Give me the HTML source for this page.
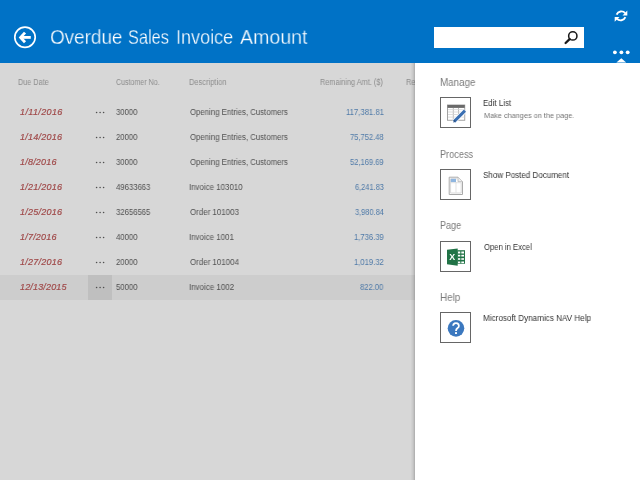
<!DOCTYPE html>
<html><head><meta charset="utf-8">
<style>
html,body{margin:0;padding:0;width:640px;height:480px;overflow:hidden;background:#d7d7d7;font-family:"Liberation Sans",sans-serif;}
.t{position:absolute;white-space:nowrap;line-height:1;transform-origin:0 0;will-change:transform;}
#hdr{position:absolute;left:0;top:0;width:640px;height:63px;background:#0072c6;}
#panel{position:absolute;z-index:5;left:415px;top:63px;width:225px;height:417px;background:#fff;}
#shadow{position:absolute;z-index:5;left:411px;top:63px;width:4px;height:417px;background:linear-gradient(to right,rgba(0,0,0,0.01),rgba(0,0,0,0.07) 50%,rgba(0,0,0,0.2));}
.title{color:#fff;-webkit-text-stroke:0.3px #0072c6;}
.hd{color:#8c8c8c;}
.dt{color:#a04a4a;-webkit-text-stroke:0.2px #a04a4a;}
.tx{color:#505050;}
.am{color:#4f7aa8;}
.dots{position:absolute;width:9px;height:2px;}
.dots i{position:absolute;top:0;width:1.6px;height:1.6px;border-radius:50%;background:#555;}
.sec{color:#7a7a7a;z-index:6;}
.it{color:#333;z-index:6;}
.sub{color:#747474;z-index:6;}
.box{position:absolute;z-index:6;left:440px;width:29px;height:29px;border:1px solid #666;background:#fff;}
.ico{position:absolute;z-index:7;will-change:transform;left:440px;}
</style></head><body>
<div id="hdr"></div>
<!-- back button -->
<svg style="position:absolute;left:0;top:0" width="60" height="62">
  <circle cx="25" cy="37.25" r="10.2" fill="none" stroke="#fff" stroke-width="1.7"/>
  <path d="M20.5 37.4 L30.8 37.4" fill="none" stroke="#fff" stroke-width="2.8"/>
  <path d="M25 32.6 L20.6 37.4 L25 42.2" fill="none" stroke="#fff" stroke-width="2.8" stroke-linejoin="miter"/>
</svg>
<!-- search -->
<div style="position:absolute;left:434px;top:27px;width:150px;height:20.5px;background:#fff;"></div>
<svg style="position:absolute;left:560px;top:28px" width="20" height="20">
  <circle cx="12.8" cy="7.9" r="4.15" fill="none" stroke="#1a1a1a" stroke-width="1.55"/>
  <path d="M9.6 11.1 L5.6 15" stroke="#1a1a1a" stroke-width="2.3" stroke-linecap="round"/>
</svg>
<!-- refresh -->
<svg style="position:absolute;left:609px;top:5px" width="24" height="24">
  <path d="M7.6 9.6 A5.2 5.2 0 0 1 16.2 8.1" fill="none" stroke="#fff" stroke-width="1.9"/>
  <path d="M18.3 5.6 L18.3 10.4 L13.5 10.4 Z" fill="#fff"/>
  <path d="M16.4 12.2 A5.2 5.2 0 0 1 7.8 13.7" fill="none" stroke="#fff" stroke-width="1.9"/>
  <path d="M5.7 16.7 L5.7 11.9 L10.5 11.9 Z" fill="#fff"/>
</svg>
<!-- more dots -->
<svg style="position:absolute;left:608px;top:45px" width="26" height="18">
  <circle cx="6.9" cy="7.3" r="1.9" fill="#fff"/>
  <circle cx="13.4" cy="7.3" r="1.9" fill="#fff"/>
  <circle cx="19.7" cy="7.3" r="1.9" fill="#fff"/>
</svg>

<!-- highlighted row -->
<div style="position:absolute;left:0;top:275px;width:415px;height:25px;background:#cdcdcd;"></div>
<div style="position:absolute;left:88px;top:275px;width:24px;height:25px;background:#bfbfbf;"></div>

<!-- row dots -->
<svg style="position:absolute;left:0;top:0" width="415" height="480">
  <g fill="#505050">
    <circle cx="96.6" cy="112.5" r="0.78"/><circle cx="100.1" cy="112.5" r="0.78"/><circle cx="103.6" cy="112.5" r="0.78"/>
    <circle cx="96.6" cy="137.5" r="0.78"/><circle cx="100.1" cy="137.5" r="0.78"/><circle cx="103.6" cy="137.5" r="0.78"/>
    <circle cx="96.6" cy="162.5" r="0.78"/><circle cx="100.1" cy="162.5" r="0.78"/><circle cx="103.6" cy="162.5" r="0.78"/>
    <circle cx="96.6" cy="187.5" r="0.78"/><circle cx="100.1" cy="187.5" r="0.78"/><circle cx="103.6" cy="187.5" r="0.78"/>
    <circle cx="96.6" cy="212.5" r="0.78"/><circle cx="100.1" cy="212.5" r="0.78"/><circle cx="103.6" cy="212.5" r="0.78"/>
    <circle cx="96.6" cy="237.5" r="0.78"/><circle cx="100.1" cy="237.5" r="0.78"/><circle cx="103.6" cy="237.5" r="0.78"/>
    <circle cx="96.6" cy="262.5" r="0.78"/><circle cx="100.1" cy="262.5" r="0.78"/><circle cx="103.6" cy="262.5" r="0.78"/>
    <circle cx="96.6" cy="287.5" r="0.78"/><circle cx="100.1" cy="287.5" r="0.78"/><circle cx="103.6" cy="287.5" r="0.78"/>
  </g>
</svg>

<div id="shadow"></div>
<div id="panel"></div>
<svg style="position:absolute;z-index:6;left:612px;top:54px" width="18" height="10"><path d="M4.4 8.4 L9.3 4.3 L14.2 8.4 Z" fill="#fff"/></svg>

<div class="box" style="top:97px;"></div>
<div class="box" style="top:168.5px;"></div>
<div class="box" style="top:240.5px;"></div>
<div class="box" style="top:312px;"></div>


<!-- edit list icon -->
<svg class="ico" style="top:97px" width="32" height="32">
  <rect x="7.5" y="8" width="17.25" height="15.25" fill="#fff" stroke="#9a9a9a" stroke-width="0.9"/>
  <rect x="7.5" y="8" width="17.25" height="2.9" fill="#6a6a6a"/>
  <path d="M13.3 11 V23 M18.5 11 V23" stroke="#a8a8a8" stroke-width="0.8"/>
  <path d="M8 12.6 H24.5 M8 15 H24.5 M8 17.5 H24.5 M8 20.1 H24.5" stroke="#d4d4d4" stroke-width="0.8"/>
  <path d="M14 24.6 L25 13.6" stroke="#fff" stroke-width="4.6"/>
  <path d="M14 24.6 L25 13.6" stroke="#3a6fb2" stroke-width="3"/>
  <path d="M12.9 25.8 L14.6 22.8 L15.9 24.1 Z" fill="#2a4f80"/>
</svg>
<!-- posted document icon -->
<svg class="ico" style="top:168.5px" width="32" height="32">
  <path d="M9.2 8.2 H18 L22.5 12.7 V25.5 H9.2 Z" fill="#fff" stroke="#aaaaaa" stroke-width="1"/>
  <path d="M18 8.2 V12.7 H22.5" fill="#eeeeee" stroke="#b4b4b4" stroke-width="0.8"/>
  <path d="M10.6 9.8 H17.3 M21.2 13.4 V24 H10.6 V9.8" fill="none" stroke="#cfcfcf" stroke-width="0.8"/>
  <rect x="10.8" y="9.8" width="5.2" height="3.3" fill="#8fb6e0"/>
  <path d="M10.8 13.7 H21 M16 13.3 V23.5" stroke="#d6d6d6" stroke-width="0.7"/>
</svg>
<!-- excel icon -->
<svg class="ico" style="top:240.5px" width="32" height="32">
  <rect x="17.3" y="9.2" width="7.7" height="13.6" fill="#217346"/>
  <g fill="#fff">
    <rect x="18" y="10.5" width="2.3" height="2"/><rect x="21.3" y="10.5" width="2.7" height="2"/>
    <rect x="18" y="13.8" width="2.3" height="1.7"/><rect x="21.3" y="13.8" width="2.7" height="1.7"/>
    <rect x="18" y="17.2" width="2.3" height="1.6"/><rect x="21.3" y="17.2" width="2.7" height="1.6"/>
    <rect x="18" y="20.5" width="2.3" height="1.7"/><rect x="21.3" y="20.5" width="2.7" height="1.7"/>
  </g>
  <path d="M7 8.8 L17.7 7.5 V24.8 L7 23.2 Z" fill="#217346"/>
  <text x="12.1" y="19.3" text-anchor="middle" font-family="Liberation Sans" font-weight="bold" font-size="9.6" fill="#fff" transform="translate(12.1 0) scale(0.92 1) translate(-12.1 0)">X</text>
</svg>
<!-- help icon -->
<svg class="ico" style="top:312px" width="32" height="32">
  <circle cx="16" cy="16.35" r="8.3" fill="#3b78bf"/>
  <path d="M13.1 13.7 A2.9 2.75 0 1 1 17.6 16.1 C16.4 16.9 16 17.4 16 19" fill="none" stroke="#fff" stroke-width="1.8"/>
  <rect x="15.05" y="20.1" width="1.9" height="1.9" fill="#fff"/>
</svg>

<div class="t title" style="left:49.60px;top:25.82px;font-size:21px;transform:scaleX(0.9000);">Overdue</div>
<div class="t title" style="left:128.02px;top:25.82px;font-size:21px;transform:scaleX(0.7784);">Sales</div>
<div class="t title" style="left:175.53px;top:25.82px;font-size:21px;transform:scaleX(0.8594);">Invoice</div>
<div class="t title" style="left:239.75px;top:25.82px;font-size:21px;transform:scaleX(0.9326);">Amount</div>
<div class="t hd" style="left:18.40px;top:77.67px;font-size:8.3px;transform:scaleX(0.8743);">Due Date</div>
<div class="t hd" style="left:115.80px;top:77.67px;font-size:8.3px;transform:scaleX(0.8510);">Customer No.</div>
<div class="t hd" style="left:188.80px;top:77.67px;font-size:8.3px;transform:scaleX(0.9024);">Description</div>
<div class="t hd" style="left:320.10px;top:77.67px;font-size:8.3px;transform:scaleX(0.8845);">Remaining Amt. ($)</div>
<div class="t hd" style="left:406.00px;top:77.67px;font-size:8.3px;transform:scaleX(0.9000);">Re</div>
<div class="t dt" style="left:20.00px;top:108.38px;font-size:9.0px;letter-spacing:0.375px;font-style:italic">1/11/2016</div>
<div class="t tx" style="left:116.20px;top:107.80px;font-size:8.5px;transform:scaleX(0.9000);">30000</div>
<div class="t tx" style="left:189.90px;top:107.80px;font-size:8.5px;transform:scaleX(0.9168);">Opening Entries, Customers</div>
<div class="t am" style="left:345.60px;top:107.80px;font-size:8.5px;transform:scaleX(0.9049);">117,381.81</div>
<div class="t dt" style="left:20.00px;top:133.38px;font-size:9.0px;letter-spacing:0.250px;font-style:italic">1/14/2016</div>
<div class="t tx" style="left:116.20px;top:132.80px;font-size:8.5px;transform:scaleX(0.9000);">20000</div>
<div class="t tx" style="left:189.90px;top:132.80px;font-size:8.5px;transform:scaleX(0.9168);">Opening Entries, Customers</div>
<div class="t am" style="left:349.80px;top:132.80px;font-size:8.5px;transform:scaleX(0.8895);">75,752.48</div>
<div class="t dt" style="left:20.00px;top:158.38px;font-size:9.0px;letter-spacing:0.214px;font-style:italic">1/8/2016</div>
<div class="t tx" style="left:116.20px;top:157.80px;font-size:8.5px;transform:scaleX(0.9000);">30000</div>
<div class="t tx" style="left:189.90px;top:157.80px;font-size:8.5px;transform:scaleX(0.9168);">Opening Entries, Customers</div>
<div class="t am" style="left:349.80px;top:157.80px;font-size:8.5px;transform:scaleX(0.8895);">52,169.69</div>
<div class="t dt" style="left:20.00px;top:183.38px;font-size:9.0px;letter-spacing:0.250px;font-style:italic">1/21/2016</div>
<div class="t tx" style="left:116.20px;top:182.80px;font-size:8.5px;transform:scaleX(0.9079);">49633663</div>
<div class="t tx" style="left:188.97px;top:182.80px;font-size:8.5px;transform:scaleX(0.9298);">Invoice 103010</div>
<div class="t am" style="left:354.80px;top:182.80px;font-size:8.5px;transform:scaleX(0.8727);">6,241.83</div>
<div class="t dt" style="left:20.00px;top:208.38px;font-size:9.0px;letter-spacing:0.250px;font-style:italic">1/25/2016</div>
<div class="t tx" style="left:116.20px;top:207.80px;font-size:8.5px;transform:scaleX(0.9079);">32656565</div>
<div class="t tx" style="left:189.90px;top:207.80px;font-size:8.5px;transform:scaleX(0.9327);">Order 101003</div>
<div class="t am" style="left:354.80px;top:207.80px;font-size:8.5px;transform:scaleX(0.8727);">3,980.84</div>
<div class="t dt" style="left:20.00px;top:233.38px;font-size:9.0px;letter-spacing:0.214px;font-style:italic">1/7/2016</div>
<div class="t tx" style="left:116.20px;top:232.80px;font-size:8.5px;transform:scaleX(0.9062);">40000</div>
<div class="t tx" style="left:188.97px;top:232.80px;font-size:8.5px;transform:scaleX(0.9309);">Invoice 1001</div>
<div class="t am" style="left:353.90px;top:232.80px;font-size:8.5px;transform:scaleX(0.9000);">1,736.39</div>
<div class="t dt" style="left:20.00px;top:258.38px;font-size:9.0px;letter-spacing:0.250px;font-style:italic">1/27/2016</div>
<div class="t tx" style="left:116.20px;top:257.80px;font-size:8.5px;transform:scaleX(0.9062);">20000</div>
<div class="t tx" style="left:189.90px;top:257.80px;font-size:8.5px;transform:scaleX(0.9327);">Order 101004</div>
<div class="t am" style="left:353.90px;top:257.80px;font-size:8.5px;transform:scaleX(0.9000);">1,019.32</div>
<div class="t dt" style="left:20.00px;top:283.38px;font-size:9.0px;letter-spacing:0.167px;font-style:italic">12/13/2015</div>
<div class="t tx" style="left:116.20px;top:282.80px;font-size:8.5px;transform:scaleX(0.9062);">50000</div>
<div class="t tx" style="left:188.96px;top:282.80px;font-size:8.5px;transform:scaleX(0.9362);">Invoice 1002</div>
<div class="t am" style="left:360.30px;top:282.80px;font-size:8.5px;transform:scaleX(0.8962);">822.00</div>
<div class="t sec" style="left:439.75px;top:78.08px;font-size:10.3px;transform:scaleX(0.9528);">Manage</div>
<div class="t it" style="left:482.99px;top:99.24px;font-size:8.7px;transform:scaleX(0.9100);">Edit List</div>
<div class="t sub" style="left:483.90px;top:112.48px;font-size:7.7px;transform:scaleX(0.9521);">Make changes on the page.</div>
<div class="t sec" style="left:439.81px;top:149.78px;font-size:10.3px;transform:scaleX(0.8889);">Process</div>
<div class="t it" style="left:482.98px;top:170.94px;font-size:8.7px;transform:scaleX(0.9239);">Show Posted Document</div>
<div class="t sec" style="left:439.82px;top:221.48px;font-size:10.3px;transform:scaleX(0.8826);">Page</div>
<div class="t it" style="left:483.90px;top:242.64px;font-size:8.7px;transform:scaleX(0.8833);">Open in Excel</div>
<div class="t sec" style="left:439.75px;top:293.18px;font-size:10.3px;transform:scaleX(0.9550);">Help</div>
<div class="t it" style="left:482.97px;top:314.34px;font-size:8.7px;transform:scaleX(0.9348);">Microsoft Dynamics NAV Help</div>

</body></html>
